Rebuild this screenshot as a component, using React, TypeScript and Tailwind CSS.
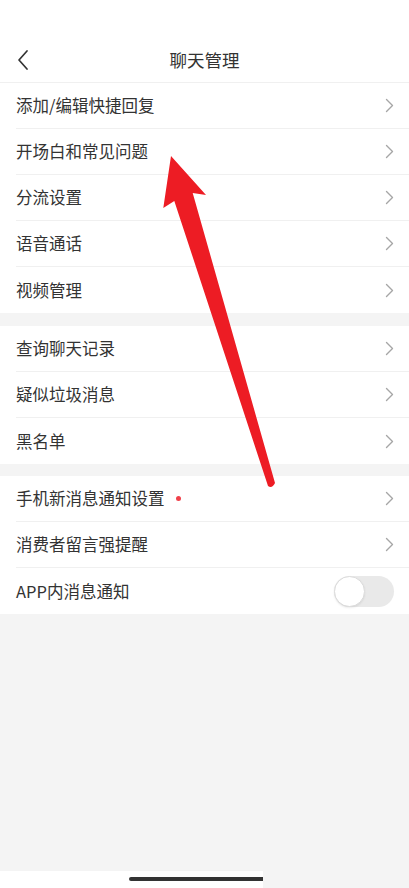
import React from "react";

const font = { fontFamily: '"Noto Sans CJK SC", "Noto Sans", sans-serif' };

function Chevron() {
  return (
    <svg width="9" height="15" viewBox="0 0 9 15" fill="none" className="shrink-0">
      <path d="M1.5 1.5 L7.5 7.5 L1.5 13.5" stroke="#a6a6a6" strokeWidth="1.4" strokeLinecap="round" strokeLinejoin="round" />
    </svg>
  );
}

function Row({ label, last, dot, toggle }: { label: string; last?: boolean; dot?: boolean; toggle?: boolean }) {
  return (
    <div className="pl-4 bg-white">
      <div className={`h-[46px] flex items-center pr-[15px] ${last ? "" : "border-b border-[#f0f0f0]"}`}>
        <div className="flex-1 flex items-center text-[16.5px] text-[#333333] leading-none">
          <span>{label}</span>
          {dot && <span className="ml-[11px] w-[5px] h-[5px] rounded-full bg-[#f0404a]" />}
        </div>
        {toggle ? (
          <div className="w-[60px] h-[31px] rounded-full bg-[#e9e9e9] p-0">
            <div className="w-[31px] h-[31px] rounded-full bg-white border border-[#dcdcdc] shadow-[0_1px_2px_rgba(0,0,0,0.08)]" />
          </div>
        ) : (
          <Chevron />
        )}
      </div>
    </div>
  );
}

export default function App() {
  return (
    <div className="relative w-[409px] h-[888px] bg-[#f4f4f4] flex flex-col overflow-hidden" style={font}>
      <div className="bg-white pt-[40px] border-b border-[#f0f0f0]">
        <div className="relative h-[42px] flex items-center justify-center">
          <svg width="14" height="22" viewBox="0 0 14 22" fill="none" className="absolute left-[16px] top-[9px]">
            <path d="M11 2 L3 11 L11 20" stroke="#333333" strokeWidth="1.7" strokeLinecap="round" strokeLinejoin="round" />
          </svg>
          <span className="text-[17.5px] text-[#333333] leading-none -mt-[2px]">聊天管理</span>
        </div>
      </div>

      <div className="flex flex-col">
        <Row label="添加/编辑快捷回复" />
        <Row label="开场白和常见问题" />
        <Row label="分流设置" />
        <Row label="语音通话" />
        <Row label="视频管理" last />
      </div>
      <div className="h-[13px]" />
      <div className="flex flex-col">
        <Row label="查询聊天记录" />
        <Row label="疑似垃圾消息" />
        <Row label="黑名单" last />
      </div>
      <div className="h-[12px]" />
      <div className="flex flex-col">
        <Row label="手机新消息通知设置" dot />
        <Row label="消费者留言强提醒" />
        <Row label="APP内消息通知" last toggle />
      </div>

      <div className="flex-1" />
      <div className="h-[17px] flex">
        <div className="w-[263px] h-full bg-white pl-[129px] pt-[6px]">
          <div className="w-[134px] h-[4px] rounded-l-full bg-[#333333]" />
        </div>
      </div>

      <svg
        className="absolute inset-0 pointer-events-none"
        width="409"
        height="888"
        viewBox="0 0 409 888"
      >
        <path
          d="M171 156 L206 195 L192.7 193 L275 483 Q272 489 268 486 L174.3 201 L163.3 208 Z"
          fill="#ed1c24"
          strokeLinejoin="round"
        />
      </svg>
    </div>
  );
}
